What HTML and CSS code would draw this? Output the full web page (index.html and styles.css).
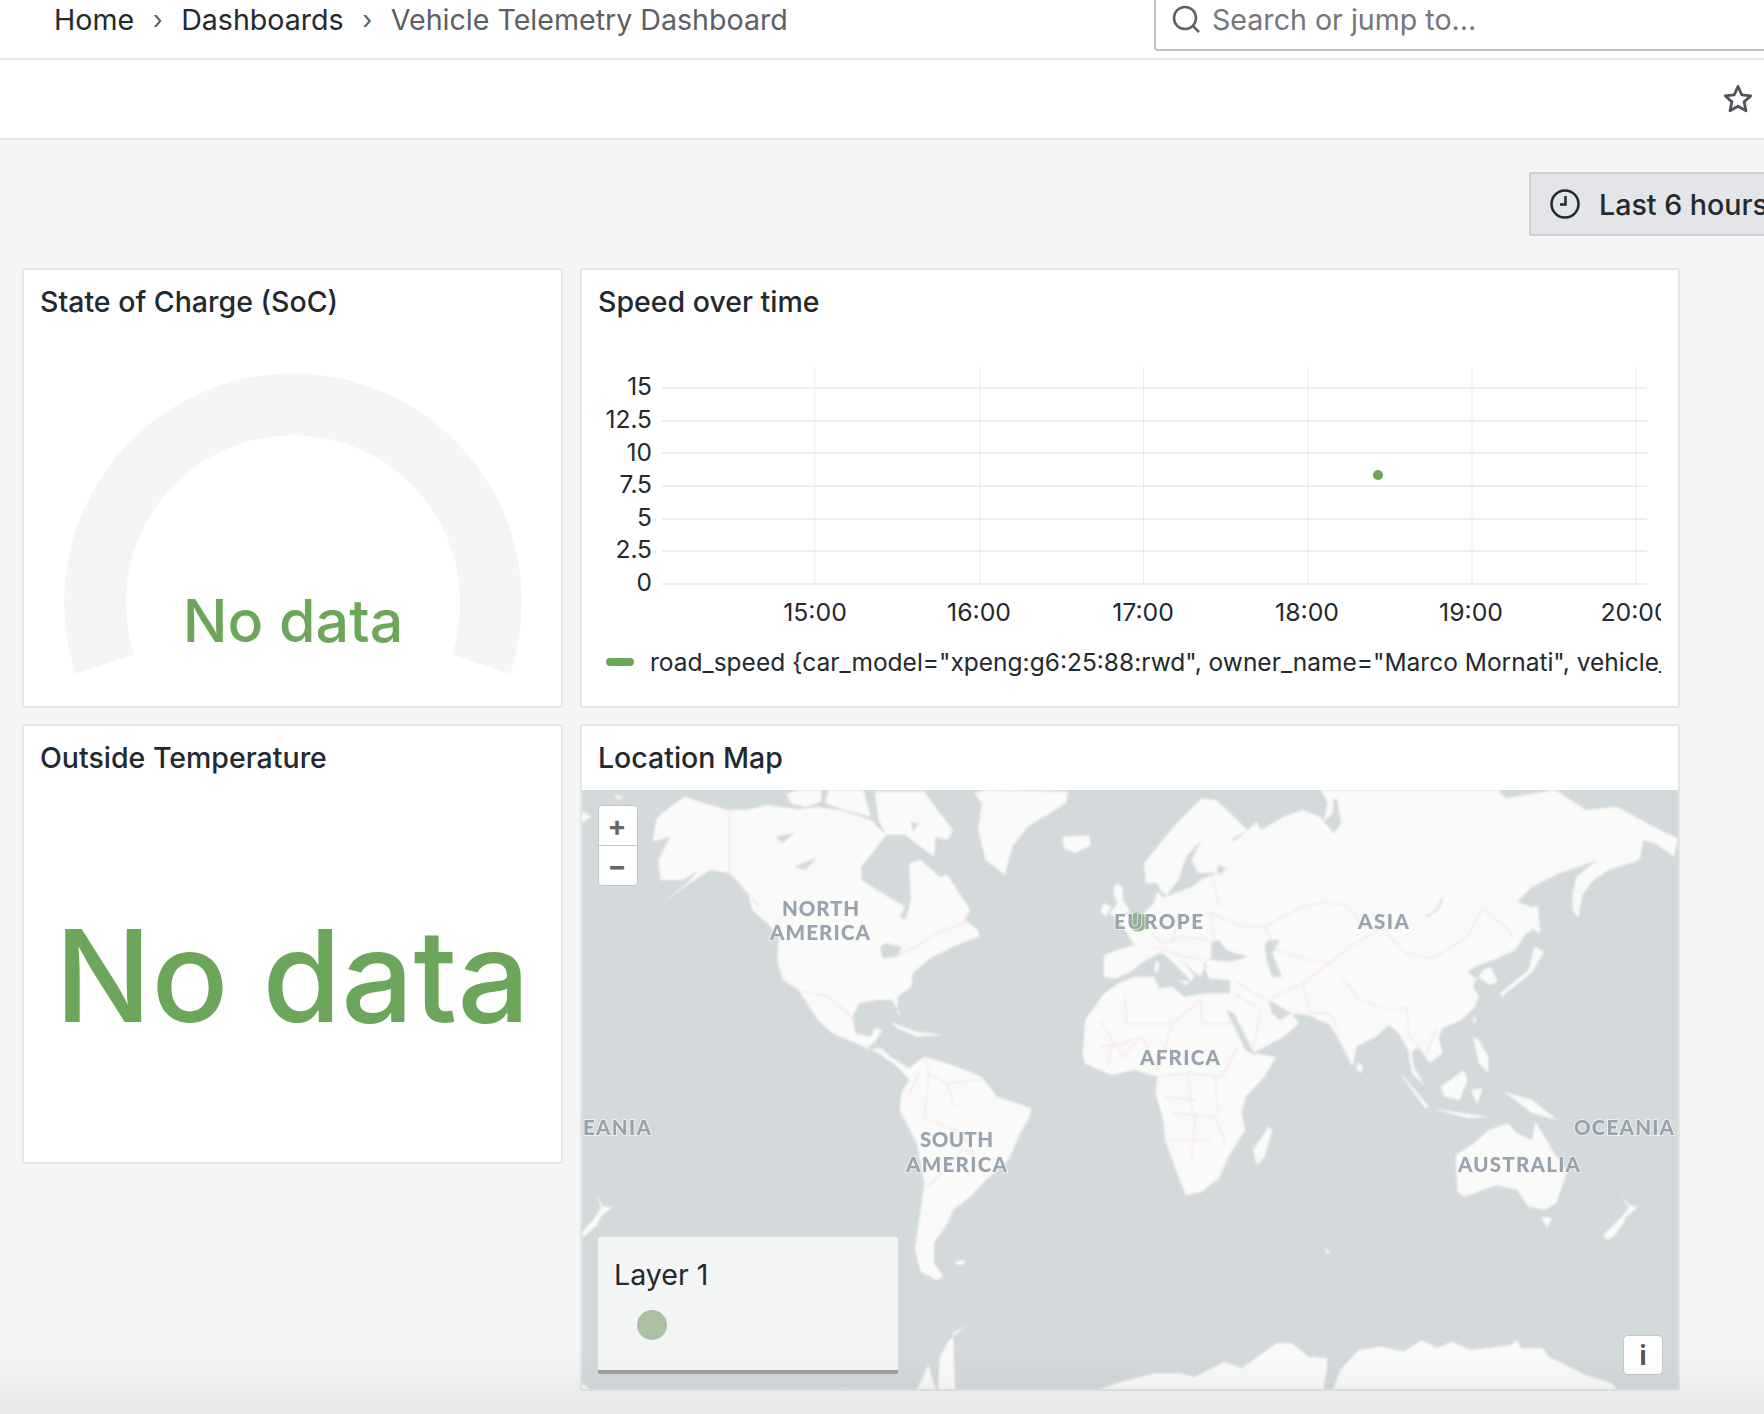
FILE: index.html
```html
<!DOCTYPE html>
<html lang="en">
<head>
  <meta charset="UTF-8">
  <meta name="viewport" content="width=device-width, initial-scale=1.0">
  <title>Vehicle Telemetry Dashboard</title>
  <link rel="stylesheet" href="styles.css">
</head>
<body>
  <header class="topbar">
    <nav class="crumbs">
      <a>Home</a>
      <span class="crumb-sep">›</span>
      <a>Dashboards</a>
      <span class="crumb-sep">›</span>
      <span class="crumb-current">Vehicle Telemetry Dashboard</span>
    </nav>
    <div class="search">
      <svg class="search-icon" viewBox="0 0 28 28"><circle cx="13" cy="13" r="11" /><path d="M21 21l6 6" /></svg>
      <span>Search or jump to...</span>
    </div>
  </header>

  <div class="toolbar">
    <svg class="star" viewBox="0 0 30 30"><path d="M15 2.500l3.800 8.300 9 1-6.700 6.100 1.900 8.900-8-4.600-8 4.600 1.900-8.900L2.200 11.800l9-1z" /></svg>
  </div>

  <div class="controls">
    <button class="timepicker">
      <svg class="clock" viewBox="0 0 30 30"><circle cx="15" cy="15" r="13.500" /><path d="M15.500 7v8.500H10" /></svg>
      Last 6 hours
    </button>
  </div>

  <main class="grid">
    <section class="panel">
      <h2 class="panel-title">State of Charge (SoC)</h2>
      <svg class="gauge" viewBox="24 333 537 374">
        <path class="gauge-arc" d="M104 665A199 199 0 1 1 482 665" />
        <text class="gauge-text" x="293" y="643">No data</text>
      </svg>
    </section>

    <section class="panel">
      <h2 class="panel-title">Speed over time</h2>
      <svg class="chart" viewBox="583 333 1078 307">
        <g class="grid-x">
          <path d="M815 367V584M980 367V584M1143.500 367V584M1308 367V584M1472 367V584M1636 367V584" />
        </g>
        <g class="grid-y">
          <path d="M662 388H1647M662 421H1647M662 453H1647M662 486H1647M662 519H1647M662 551H1647M662 584H1647" />
        </g>
        <g class="y-labels">
          <text x="652" y="395">15</text>
          <text x="652" y="428">12.5</text>
          <text x="652" y="461">10</text>
          <text x="652" y="493">7.5</text>
          <text x="652" y="526">5</text>
          <text x="652" y="558">2.5</text>
          <text x="652" y="591">0</text>
        </g>
        <g class="x-labels">
          <text x="815" y="621">15:00</text>
          <text x="979" y="621">16:00</text>
          <text x="1143" y="621">17:00</text>
          <text x="1307" y="621">18:00</text>
          <text x="1471" y="621">19:00</text>
          <text x="1635" y="621">20:00</text>
        </g>
        <circle class="point" cx="1378" cy="475" r="5" />
      </svg>
      <div class="legend">
        <span class="legend-swatch"></span>
        <span class="legend-text">road_speed {car_model="xpeng:g6:25:88:rwd", owner_name="Marco Mornati", vehicle_id="xpeng-g6"}</span>
      </div>
    </section>

    <section class="panel">
      <h2 class="panel-title">Outside Temperature</h2>
      <div class="stat">No data</div>
    </section>

    <section class="panel panel-map">
      <h2 class="panel-title">Location Map</h2>
      <div class="map">
        <svg class="map-svg" viewBox="581 790 1098 600">
          <rect class="ocean" x="581" y="790" width="1098" height="600" />

          <g class="land-layer">
            <!-- americas, greenland, arctic -->
            <g transform="translate(580 720) scale(.3827 .3333)">
              <polygon class="land" points="200,295 235,260 275,230 320,248 385,270 440,268 490,255 530,262 570,268 620,262 680,270 760,300 800,345 770,390 735,440 735,480 790,520 850,560 835,590 850,600 865,540 860,430 890,420 940,470 960,465 1020,570 1000,610 950,620 1000,600 1040,650 975,680 915,715 870,760 865,800 830,830 830,880 840,885 815,840 780,840 730,850 712,890 720,940 760,950 770,925 790,930 770,965 745,990 790,985 810,1010 860,1045 900,1010 960,1030 1050,1070 1090,1130 1180,1165 1175,1190 1150,1240 1120,1320 1060,1380 1020,1430 975,1470 960,1510 925,1570 925,1630 950,1670 930,1680 890,1655 875,1590 885,1510 900,1390 880,1270 835,1170 840,1120 860,1080 830,1040 780,1000 720,970 660,940 625,905 570,810 530,780 515,720 520,650 490,610 450,570 440,520 410,480 390,460 340,450 300,480 215,550 280,490 310,450 270,480 210,480 205,420 235,350 190,365" />
              <polygon class="land" points="770,215 900,215 940,280 975,330 960,360 930,350 925,410 890,380 850,345 800,345 780,300" />
              <polygon class="land" points="650,210 740,210 760,290 690,270 640,250" />
              <polygon class="land" points="540,222 570,210 630,210 630,245 590,262 550,250" />
              <polygon class="land" points="1030,220 1060,210 1275,215 1270,250 1170,320 1130,380 1110,465 1060,420 1040,330 1050,250" />
              <polygon class="land" points="1260,350 1330,345 1335,375 1295,400 1265,385" />
              <polygon class="land" points="810,905 880,935 950,945 880,950 830,925" />
              <polygon class="land" points="1005,600 1040,630 1045,655 1010,640" />
              <polygon class="land" points="0,270 30,290 0,310" />
              <polygon class="land" points="90,225 115,230 100,240" />
              <polygon class="water" points="570,810 600,880 620,905 590,850" />
              <polygon class="water" points="510,350 560,340 530,370" />
              <polygon class="water" points="560,440 620,412 590,450" />
              <polygon class="water" points="865,305 885,310 870,335" />
              <polygon class="water" points="785,680 800,670 840,680 830,710 790,715" />
              <path class="border" d="M390 270V460L470 560M820 712L880 680 930 640 1005 610M570 810L650 830 700 880 715 900M770 965L790 1000M900 1010L910 1060 960 1090 1050 1080M910 1060L900 1200M885 1060L860 1120M960 1090L980 1160M910 1200L1000 1240 1030 1300 1000 1290 910 1400" />
            </g>

            <!-- eurasia, africa, islands east -->
            <g transform="translate(1100 780) scale(.3827 .3333)">
              <polygon class="land" points="10,525 60,505 90,495 60,440 35,405 110,405 140,370 150,335 165,352 200,338 240,320 270,295 310,280 255,278 240,240 265,180 225,230 205,300 175,345 160,335 150,310 120,310 115,250 200,130 265,55 305,60 385,150 350,175 345,190 410,125 420,150 480,110 530,90 575,110 610,160 630,130 620,60 580,30 1040,30 1060,55 1190,30 1270,90 1350,80 1430,130 1480,160 1510,175 1500,230 1450,190 1420,180 1410,240 1330,270 1290,300 1260,345 1250,415 1235,390 1235,340 1245,290 1300,240 1240,265 1200,280 1130,320 1090,365 1135,385 1140,440 1110,465 1085,510 1030,540 990,555 960,575 985,600 1000,570 1020,560 1040,605 1020,615 985,590 975,620 990,650 980,680 945,720 895,745 885,770 895,820 860,850 835,800 815,815 820,860 850,920 815,880 805,810 780,760 755,735 720,770 670,800 660,860 625,780 600,735 545,705 490,700 460,680 500,700 520,730 480,770 400,820 460,830 430,890 380,950 370,1000 380,1050 335,1130 311,1195 267,1235 224,1245 205,1190 170,1080 165,1020 145,940 150,890 90,870 30,885 -40,850 -45,820 -39,720 11,640 60,600 10,590" />
              <polygon class="land" points="578,30 612,30 608,100 585,125 595,70" />
              <polygon class="water" points="30,600 80,575 115,545 145,525 180,510 250,580 275,545 285,595 340,600 340,640 280,640 220,650 190,620 155,625 140,590 90,590 50,610" />
              <polygon class="land" points="140,500 180,535 220,582 238,605 248,588 205,530 175,495" />
              <polygon class="land" points="250,535 275,560 262,590 240,570" />
              <polygon class="land" points="145,545 155,550 150,578 142,575" />
              <polygon class="land" points="205,600 235,605 225,615" />
              <polygon class="land" points="275,570 290,550 400,550 400,580 345,600 285,595" />
              <polygon class="water" points="290,490 310,480 330,510 385,530 345,545 290,540" />
              <polygon class="water" points="440,480 470,480 450,520 475,590 450,590 435,540 430,495" />
              <polygon class="water" points="330,690 350,700 405,825 380,810" />
              <polygon class="water" points="440,660 500,700 470,720 450,700" />
              <polygon class="water" points="310,255 330,265 315,285 305,270" />
              <polygon class="land" points="40,310 60,320 60,360 80,395 40,410 25,400 45,370 35,340" />
              <polygon class="land" points="10,370 30,380 15,410 0,395" />
              <polygon class="land" points="1045,640 1120,570 1135,500 1160,515 1130,575 1050,650" />
              <polygon class="land" points="1130,380 1145,380 1150,460 1135,450" />
              <polygon class="land" points="790,885 860,980 850,985 790,890" />
              <polygon class="land" points="870,985 950,1000 1020,1010 960,1015" />
              <polygon class="land" points="890,920 950,870 960,900 940,960 900,950" />
              <polygon class="land" points="970,930 1000,925 985,975" />
              <polygon class="land" points="975,770 990,780 1015,830 1015,880 990,850" />
              <polygon class="land" points="1055,935 1130,960 1195,1020 1130,1000 1095,970" />
              <polygon class="land" points="975,710 985,715 978,735" />
              <polygon class="land" points="672,848 685,855 685,878 670,870" />
              <polygon class="land" points="440,1040 450,1050 430,1130 410,1155 400,1110" />
              <path class="baikal" d="M893 355C890 385 875 400 850 410" />
              <path class="border" d="M430 440L530 380 590 365 650 380 680 430 740 450 800 520 870 535 960 470 1000 385 1060 440 1080 470M430 440L460 510 550 540 600 550 650 500 730 450M630 590L680 660 760 690 800 680 810 770M530 610L550 700M600 550L530 610 440 660M290 400L370 440 430 440M290 270L310 380M130 450L200 420 290 400 300 480M140 500L220 530M130 450L160 490 210 470 290 480M200 420L190 490M220 530L290 540M65 640L70 730 190 730 265 660 265 730 350 730M0 720L60 830 110 770 150 870 190 730M150 890L230 880 320 890 360 800M190 1000L300 1010 330 1090M170 1080L290 1080M250 1000L240 1140M350 600L400 640 440 660M350 640L420 690 400 810M550 700L600 700 620 740M810 770L850 830 880 740M0 800L60 790 110 770M20 860L30 800M230 880L240 1000M300 890L310 1010M170 950L250 960" />
            </g>

            <!-- south pacific, antarctica -->
            <g transform="translate(1180 1100) scale(.3724 .3333)">
              <polygon class="land" points="740,165 790,130 830,90 880,70 905,100 945,120 955,65 1000,150 1040,215 1010,310 980,330 935,320 905,270 850,255 765,290 745,275" />
              <polygon class="land" points="970,350 1000,355 985,385" />
              <polygon class="land" points="1185,285 1205,315 1230,320 1205,345 1197,350 1190,370 1165,410 1145,420 1137,405 1165,375 1190,345 1205,325" />
              <polygon class="land" points="388,448 404,452 396,462" />
              <polygon class="land" points="0,820 40,830 120,785 165,805 260,730 300,730 345,770 395,775 395,800 385,870 410,870 430,810 480,750 540,740 600,755 650,720 690,745 730,725 780,750 890,735 905,720 915,745 975,745 990,770 1090,825 1160,850 1175,870 0,870" />
            </g>

            <!-- wrap around on the west side -->
            <g transform="translate(580 1100) scale(.3827 .3333)">
              <polygon class="land" points="45,285 60,320 85,320 55,350 45,375 5,415 5,395 35,360 55,325" />
              <polygon class="land" points="980,485 1005,480 1005,492 985,494" />
              <polygon class="land" points="1355,870 1400,850 1500,820 1568,820 1568,870" />
              <polygon class="land" points="880,870 910,795 930,870" />
              <polygon class="land" points="935,870 940,770 965,720 1010,675 975,700 980,870" />
              <polygon class="land" points="0,845 30,870 0,870" />
              <polygon class="land" points="675,870 695,865 695,870" />
            </g>
          </g>

          <circle class="marker" cx="1138" cy="922" r="9.500" />

          <g class="map-labels">
            <text x="782" y="916" textLength="77">NORTH</text>
            <text x="770" y="940" textLength="100">AMERICA</text>
            <text x="1114" y="929" textLength="89">EUROPE</text>
            <text x="1358" y="929" textLength="51">ASIA</text>
            <text x="1140" y="1065" textLength="80">AFRICA</text>
            <text x="1574" y="1135" textLength="100">OCEANIA</text>
            <text x="1458" y="1172" textLength="122">AUSTRALIA</text>
            <text x="583" y="1135" textLength="68">EANIA</text>
            <text x="920" y="1147" textLength="73">SOUTH</text>
            <text x="906" y="1172" textLength="101">AMERICA</text>
          </g>
        </svg>

        <div class="zoom-ctl">
          <button class="zoom-btn">+</button>
          <button class="zoom-btn">−</button>
        </div>
        <button class="info-btn">i</button>

        <div class="map-legend">
          <div class="map-legend-title">Layer 1</div>
          <span class="map-legend-dot"></span>
        </div>
      </div>
    </section>
  </main>

  <div class="page-fade"></div>
</body>
</html>
```

FILE: styles.css
```css
* { box-sizing: border-box; }
html, body { height: 100%; }
body { margin: 0; background: #f4f5f5; color: #24292e; font-family: Inter, "Liberation Sans", sans-serif; overflow: hidden; position: relative; }

.topbar { height: 60px; background: #fff; border-bottom: 2px solid #e4e5e6; display: flex; align-items: flex-start; }
.crumbs { width: 1154px; padding: 0 0 0 54px; display: flex; align-items: center; height: 38px; font-size: 28.600px; color: #24292e; flex-shrink: 0; }
.crumb-sep { margin: 0 18.500px; font-size: 26px; color: #5c5f66; }
.crumb-current { color: #5c5f66; }
.search { width: 700px; height: 51px; flex-shrink: 0; border: 2px solid #bfc0c2; border-top: 0; border-radius: 0 0 4px 4px; display: flex; align-items: center; padding: 0 0 11px 16px; font-size: 28.600px; color: #74767b; gap: 12px; }
.search-icon { width: 28px; height: 28px; fill: none; stroke: #5c5f66; stroke-width: 2.500; }

.toolbar { height: 80px; background: #fff; border-bottom: 2px solid #e4e5e6; display: flex; align-items: center; justify-content: flex-end; padding-right: 11px; }
.star { width: 30px; height: 30px; fill: none; stroke: #50535a; stroke-width: 2.800; stroke-linejoin: round; }

.controls { height: 128px; display: flex; justify-content: flex-start; padding: 32px 0 0 1529px; }
.timepicker { width: 300px; height: 64px; flex-shrink: 0; background: #e4e5e8; border: 2px solid #cfd0d3; border-radius: 3px; display: flex; align-items: center; gap: 19px; padding: 0 0 0 19px; font: 500 28.600px Inter, "Liberation Sans", sans-serif; color: #24292e; white-space: nowrap; }
.clock { width: 30px; height: 30px; flex-shrink: 0; fill: none; stroke: #24292e; stroke-width: 2.500; }

.grid { display: grid; grid-template-columns: 541px 1100px; grid-template-rows: 440px 440px 227px; column-gap: 17px; row-gap: 16px; margin-left: 22px; }
.panel { background: #fff; border: 2px solid #e4e6e6; border-radius: 3px; display: flex; flex-direction: column; min-height: 0; overflow: hidden; }
.panel-map { grid-row: 2 / span 2; grid-column: 2; height: 667px; }
.panel-title { margin: 0; height: 64px; flex-shrink: 0; padding: 0 0 2px 16px; display: flex; align-items: center; font-size: 28.500px; font-weight: 500; color: #24292e; }

.gauge { display: block; width: 537px; height: 374px; }
.gauge-arc { fill: none; stroke: #f4f5f5; stroke-width: 62; }
.gauge-text { fill: #6ca65a; font-size: 59.500px; font-weight: 500; text-anchor: middle; }

.stat { flex: 1; display: flex; align-items: center; justify-content: center; padding-bottom: 2px; color: #6ca65a; font-size: 127.500px; font-weight: 500; white-space: nowrap; }

.chart { display: block; width: 1078px; height: 307px; margin: -1px 0 0 1px; }
.grid-x path { stroke: #eceded; stroke-width: 1; fill: none; }
.grid-y path { stroke: #e8e9e9; stroke-width: 1.500; fill: none; }
.y-labels text { font-size: 24.500px; fill: #24292e; text-anchor: end; }
.x-labels text { font-size: 24.800px; fill: #24292e; text-anchor: middle; }
.point { fill: #6ca65a; }

.legend { display: flex; align-items: center; gap: 16px; margin: 0 0 0 24px; width: 1055px; height: 44px; overflow: hidden; white-space: nowrap; font-size: 24.500px; color: #24292e; }
.legend-swatch { width: 28px; height: 8px; border-radius: 4px; background: #6ca65a; flex-shrink: 0; }
.legend-text { flex-shrink: 0; }

.map { position: relative; flex: 1; overflow: hidden; background: #d4dadc; }
.map-svg { display: block; width: 1098px; height: 600px; margin-left: -1px; }
.ocean, .water { fill: #d4dadc; }
.land { fill: #fafaf8; }
.land-layer { filter: blur(.8px); }
.border { fill: none; stroke: #f3e5e6; stroke-width: 1.200; vector-effect: non-scaling-stroke; }
.baikal { fill: none; stroke: #d4dadc; stroke-width: 1.500; vector-effect: non-scaling-stroke; }
.marker { fill: #669a58; opacity: .7; }
.map-labels text { font: 900 20.500px Lato, "Liberation Sans", sans-serif; fill: #98a3ae; stroke: #f6f7f7; stroke-width: 2; paint-order: stroke; stroke-opacity: .7; }

.zoom-ctl { position: absolute; left: 16px; top: 15px; width: 40px; height: 81px; background: #fff; border: 1px solid #c4c6c8; border-radius: 5px; display: flex; flex-direction: column; overflow: hidden; }
.zoom-btn { flex: 1; background: #fff; border: 0; padding: 0 2px 0 0; font: 700 28px Inter, "Liberation Sans", sans-serif; color: #666; }
.zoom-btn + .zoom-btn { border-top: 1px solid #c4c6c8; }
.info-btn { position: absolute; right: 15px; bottom: 14px; width: 40px; height: 40px; background: #fff; border: 1px solid #c4c6c8; border-radius: 5px; padding: 0; font: 700 26px Inter, "Liberation Sans", sans-serif; color: #555; }

.map-legend { position: absolute; left: 16px; bottom: 15px; width: 300px; height: 137px; background: #f4f5f5; border-bottom: 4px solid #a0a0a0; border-radius: 2px; padding: 21px 16px 0; }
.map-legend-title { font-size: 28.600px; line-height: 34px; color: #24292e; }
.map-legend-dot { display: block; width: 30px; height: 30px; margin: 18px 0 0 23px; border-radius: 50%; background: #a9c0a2; }

.page-fade { position: absolute; left: 0; right: 0; bottom: 0; height: 60px; background: linear-gradient(rgba(0, 0, 0, 0), rgba(0, 0, 0, .055)); pointer-events: none; }
```
